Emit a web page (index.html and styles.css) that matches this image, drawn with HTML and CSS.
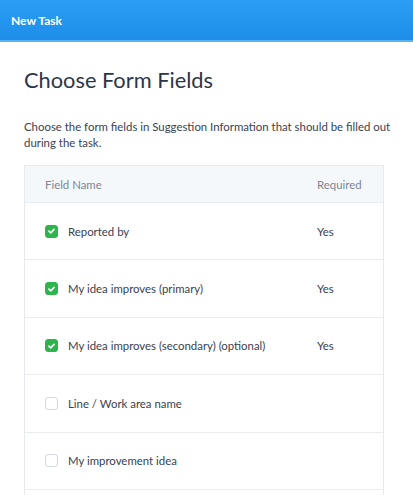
FILE: index.html
```html
<!DOCTYPE html>
<html>
<head>
<meta charset="utf-8">
<link rel="stylesheet" href="styles.css">
</head>
<body>
<header class="topbar"><span class="topbar-title">New Task</span></header>
<main class="content">
  <h1 class="title">Choose Form Fields</h1>
  <p class="desc">Choose the form fields in Suggestion Information that should be filled out during the task.</p>
  <div class="table">
    <div class="row head">
      <div class="cell name">Field Name</div>
      <div class="cell req">Required</div>
    </div>
    <div class="row">
      <div class="cell name"><span class="cb on"><svg viewBox="0 0 12 12" width="12" height="12"><path d="M3.2 6.2 L5.1 8 L8.8 4.2" fill="none" stroke="#fff" stroke-width="1.8" stroke-linecap="round" stroke-linejoin="round"/></svg></span>Reported by</div>
      <div class="cell req">Yes</div>
    </div>
    <div class="row">
      <div class="cell name"><span class="cb on"><svg viewBox="0 0 12 12" width="12" height="12"><path d="M3.2 6.2 L5.1 8 L8.8 4.2" fill="none" stroke="#fff" stroke-width="1.8" stroke-linecap="round" stroke-linejoin="round"/></svg></span>My idea improves (primary)</div>
      <div class="cell req">Yes</div>
    </div>
    <div class="row">
      <div class="cell name"><span class="cb on"><svg viewBox="0 0 12 12" width="12" height="12"><path d="M3.2 6.2 L5.1 8 L8.8 4.2" fill="none" stroke="#fff" stroke-width="1.8" stroke-linecap="round" stroke-linejoin="round"/></svg></span>My idea improves (secondary) (optional)</div>
      <div class="cell req">Yes</div>
    </div>
    <div class="row">
      <div class="cell name"><span class="cb"></span>Line / Work area name</div>
      <div class="cell req"></div>
    </div>
    <div class="row">
      <div class="cell name"><span class="cb"></span>My improvement idea</div>
      <div class="cell req"></div>
    </div>
    <div class="row">
      <div class="cell name"></div>
      <div class="cell req"></div>
    </div>
  </div>
</main>
</body>
</html>
```
FILE: styles.css
```css
html, body {
  margin: 0;
  padding: 0;
  background: #fff;
  overflow: hidden;
}
body {
  font-family: Lato, "Open Sans", sans-serif;
  color: #333b48;
}
.topbar {
  height: 40px;
  background: linear-gradient(#2b9ef4, #1e8ee9);
  border-bottom: 2px solid #59b3f4;
  display: flex;
  align-items: center;
  padding-left: 11px;
}
.topbar-title {
  font-family: Lato, sans-serif;
  font-weight: 700;
  font-size: 12px;
  color: #fff;
}
.content {
  padding: 0 22px 0 24px;
}
.title {
  font-family: Lato, sans-serif;
  font-weight: 400;
  font-size: 21.8px;
  color: #2c3646;
  margin: 22px 0 0;
  line-height: 32px;
}
.desc {
  font-size: 11.4px;
  line-height: 16px;
  color: #3a4250;
  margin: 23px 0 0;
}
.table {
  margin: 14px 7px 0 0;
  border: 1px solid #e6eaee;
  border-bottom: none;
}
.row {
  display: flex;
  align-items: center;
  height: 56.4px;
  border-bottom: 1px solid #e9edf1;
  padding: 0 22px 0 20px;
  font-size: 11.4px;
  color: #3a4250;
}
.row.head {
  height: 36px;
  background: #f5f8fb;
  color: #7c8694;
}
.cell.name {
  flex: 1;
  display: flex;
  align-items: center;
}
.cell.req {
  width: 44px;
}
.cb {
  width: 11px;
  height: 11px;
  border: 1px solid #d3d8de;
  border-radius: 3px;
  margin-right: 10px;
  display: flex;
  align-items: center;
  justify-content: center;
  background: #fff;
}
.cb.on {
  background: #2fb34c;
  border-color: #2fb34c;
}
```
